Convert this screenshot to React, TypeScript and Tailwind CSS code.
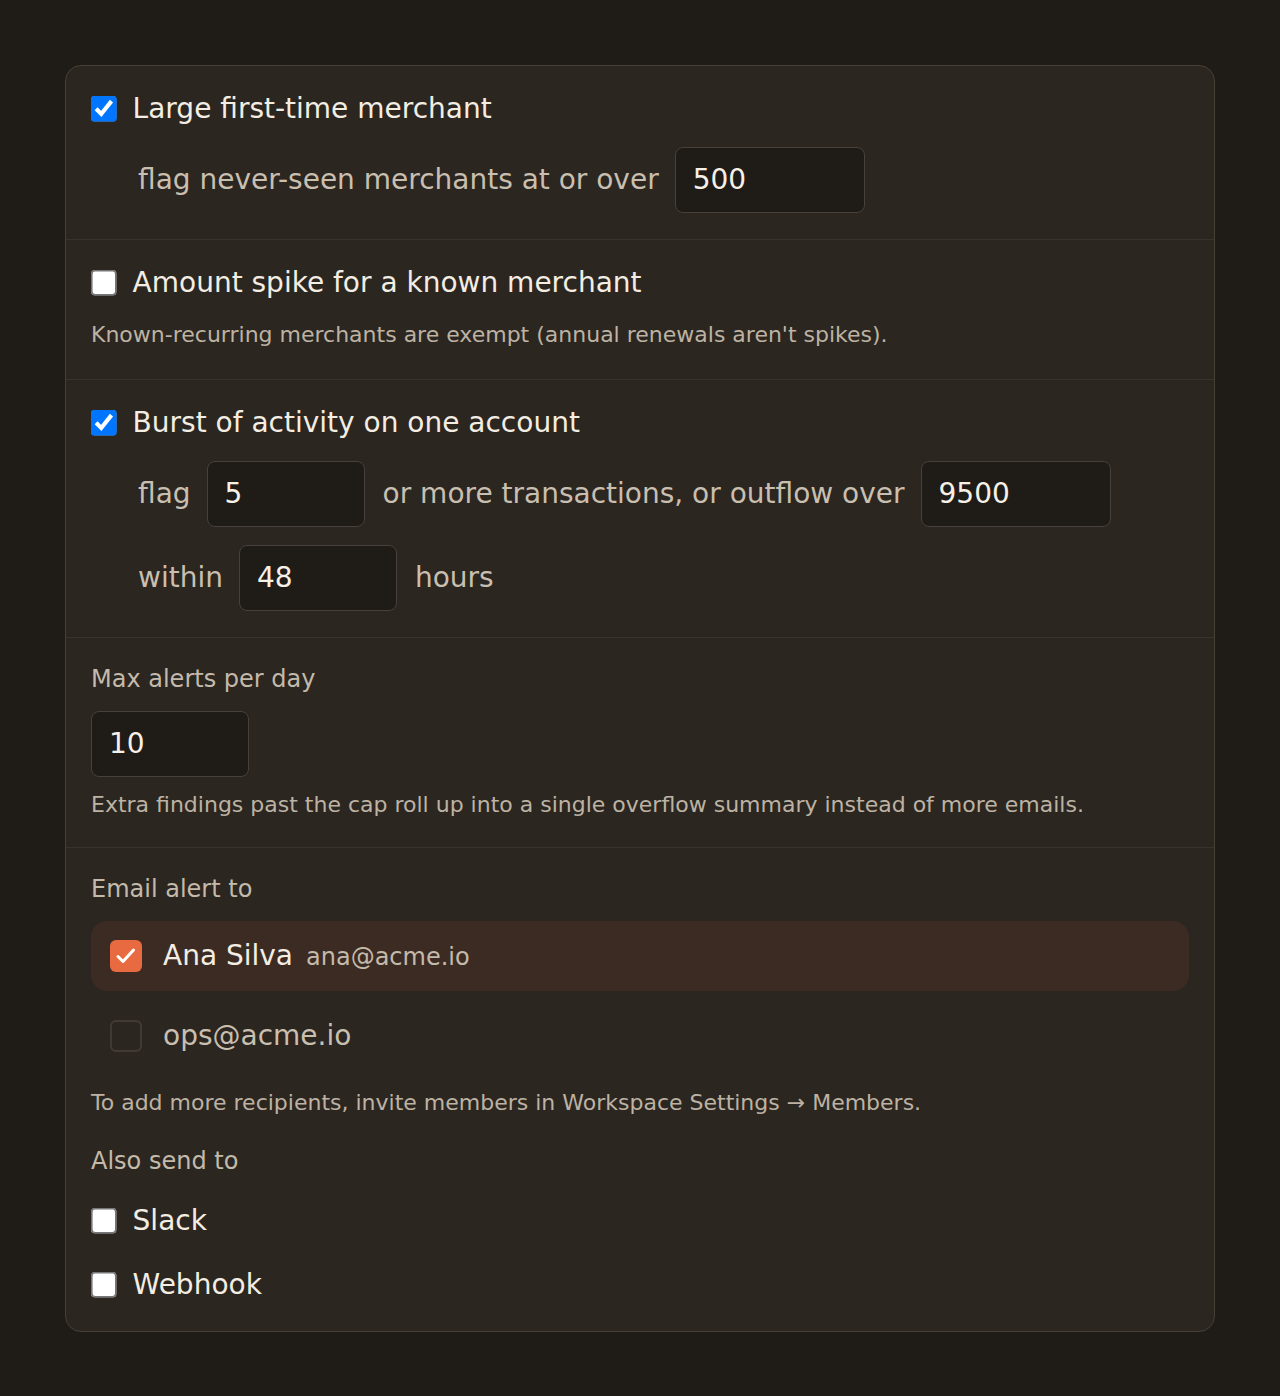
import React from 'react';

const font = { fontFamily: '"DejaVu Sans", "Noto Sans", sans-serif' };

// native checkbox, drawn at 16px then zoomed so its border and tick scale with it
const NativeBox = ({ checked }: { checked: boolean }) => (
  <input
    type="checkbox"
    checked={checked}
    onChange={() => {}}
    className="w-4 h-4 m-0 shrink-0 [zoom:1.6]"
  />
);

const NumInput = ({ value, width }: { value: string; width: string }) => (
  <div
    className={`${width} h-[66px] mr-[2px] shrink-0 flex items-center pl-[17px] rounded-[8px] border border-[#48403a] bg-[#1f1b17] text-[28px] text-[#f6f0e6]`}
  >
    {value}
  </div>
);

const Rule = ({ checked, title }: { checked: boolean; title: string }) => (
  <label className="flex items-center gap-[16px] h-[34px]">
    <NativeBox checked={checked} />
    <span className="text-[28px] leading-[34px] text-[#f3ede3]">{title}</span>
  </label>
);

const Recipient = ({
  checked,
  name,
  email,
}: {
  checked: boolean;
  name?: string;
  email: string;
}) => (
  <div
    className={`flex items-center h-[70px] px-[19px] rounded-[16px] ${
      checked ? 'bg-[#3c2b22]' : ''
    }`}
  >
    {checked ? (
      <div className="w-[32px] h-[32px] rounded-[6px] bg-[#e86a40] flex items-center justify-center shrink-0">
        <svg width="32" height="32" viewBox="0 0 32 32" fill="none">
          <path
            d="M8 16.5 13 21.5 23.5 10"
            stroke="#fff"
            strokeWidth="3"
            strokeLinecap="round"
            strokeLinejoin="round"
          />
        </svg>
      </div>
    ) : (
      <div className="w-[32px] h-[32px] rounded-[6px] border-2 border-[#423a31] shrink-0" />
    )}
    <div className="flex items-baseline gap-[13px] ml-[21px]">
      {name && <span className="text-[28px] text-[#f3ede3]">{name}</span>}
      <span
        className={
          name ? 'text-[24px] text-[#c4baab]' : 'text-[28px] text-[#c9bfb0]'
        }
      >
        {email}
      </span>
    </div>
  </div>
);

export default function App() {
  return (
    <div className="min-h-[1396px] bg-[#1f1c18] pt-[65px] px-[65px]" style={font}>
      <div className="w-[1150px] rounded-[16px] border border-[#483f35] bg-[#2b2620]">
        {/* Large first-time merchant */}
        <section className="px-[25px] pt-[26px] pb-[26px] border-b border-[#3a332b]">
          <Rule checked title="Large first-time merchant" />
          <div className="flex items-center gap-[16px] mt-[21px] pl-[47px]">
            <span className="text-[28px] text-[#c9bfb0]">flag never-seen merchants at or over</span>
            <NumInput value="500" width="w-[190px]" />
          </div>
        </section>

        {/* Amount spike */}
        <section className="px-[25px] pt-[26px] pb-[28px] border-b border-[#3a332b]">
          <Rule checked={false} title="Amount spike for a known merchant" />
          <p className="mt-[18px] text-[22px] leading-[33px] text-[#bdb2a3]">
            Known-recurring merchants are exempt (annual renewals aren't spikes).
          </p>
        </section>

        {/* Burst of activity */}
        <section className="px-[25px] pt-[26px] pb-[26px] border-b border-[#3a332b]">
          <Rule checked title="Burst of activity on one account" />
          <div className="flex items-center gap-[16px] mt-[21px] pl-[47px]">
            <span className="text-[28px] text-[#c9bfb0]">flag</span>
            <NumInput value="5" width="w-[158px]" />
            <span className="text-[28px] text-[#c9bfb0]">or more transactions, or outflow over</span>
            <NumInput value="9500" width="w-[190px]" />
          </div>
          <div className="flex items-center gap-[16px] mt-[18px] pl-[47px]">
            <span className="text-[28px] text-[#c9bfb0]">within</span>
            <NumInput value="48" width="w-[158px]" />
            <span className="text-[28px] text-[#c9bfb0]">hours</span>
          </div>
        </section>

        {/* Max alerts */}
        <section className="px-[25px] pt-[27px] pb-[26px] border-b border-[#3a332b]">
          <div className="text-[24px] leading-[29px] text-[#c4baab]">Max alerts per day</div>
          <div className="mt-[17px]">
            <NumInput value="10" width="w-[158px]" />
          </div>
          <p className="mt-[11px] text-[22px] leading-[33px] text-[#bdb2a3]">
            Extra findings past the cap roll up into a single overflow summary instead of more emails.
          </p>
        </section>

        {/* Email */}
        <section className="px-[25px] pt-[27px] pb-[29px]">
          <div className="text-[24px] leading-[29px] text-[#c4baab]">Email alert to</div>
          <div className="mt-[17px] flex flex-col gap-[10px]">
            <Recipient checked name="Ana Silva" email="ana@acme.io" />
            <Recipient checked={false} email="ops@acme.io" />
          </div>
          <p className="mt-[15px] text-[22px] leading-[33px] text-[#bdb2a3]">
            To add more recipients, invite members in Workspace Settings → Members.
          </p>
          <div className="mt-[28px] text-[24px] leading-[29px] text-[#c4baab]">Also send to</div>
          <div className="mt-[28px] flex flex-col gap-[30px]">
            <Rule checked={false} title="Slack" />
            <Rule checked={false} title="Webhook" />
          </div>
        </section>
      </div>
    </div>
  );
}
